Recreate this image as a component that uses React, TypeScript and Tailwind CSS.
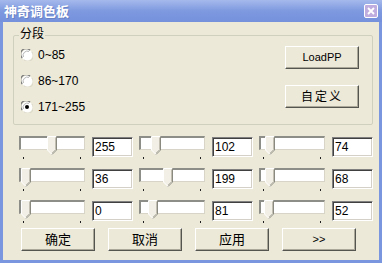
import React from 'react';

const rows = [
  [{ v: 255, t: 28 }, { v: 102, t: 12 }, { v: 74, t: 6 }],
  [{ v: 36, t: 2 }, { v: 199, t: 24 }, { v: 68, t: 6 }],
  [{ v: 0, t: 2 }, { v: 81, t: 9 }, { v: 52, t: 5 }],
];

function Radio({ checked }: { checked?: boolean }) {
  return (
    <svg width="12" height="12" viewBox="0 0 12 12">
      <circle cx="6" cy="6" r="5.5" fill="#ffffff" />
      <path d="M1.2 9 A5.5 5.5 0 0 1 9 1.2" fill="none" stroke="#7c7c7c" strokeWidth="1.3" />
      <path d="M2.4 8 A4.3 4.3 0 0 1 8 2.4" fill="none" stroke="#b4b4b4" strokeWidth="1" />
      <path d="M10.8 3 A5.5 5.5 0 0 1 3 10.8" fill="none" stroke="#d8d5c8" strokeWidth="1" />
      {checked && <circle cx="6" cy="6" r="2" fill="#000000" />}
    </svg>
  );
}

function Thumb() {
  return (
    <svg width="11" height="20" viewBox="0 0 11 20" className="block">
      <polygon points="0.5,0.5 9.5,0.5 9.5,14 5,18.5 0.5,14" fill="#f1efe6" />
      <polyline points="0.5,14 0.5,0.5 9.5,0.5" fill="none" stroke="#ffffff" />
      <polyline points="0.5,14 5,18.5" fill="none" stroke="#ffffff" />
      <polyline points="9.5,0.5 9.5,14 5,18.5" fill="none" stroke="#8a8a80" />
      <polyline points="8.5,1.5 8.5,13.6 5,17" fill="none" stroke="#c2bfb2" />
    </svg>
  );
}

function Track({ t }: { t: number }) {
  return (
    <div className="relative w-[66px] h-[24px]">
      <div className="relative w-[66px] h-[14px] bg-white border-t-2 border-l-2 border-t-[#8e8e88] border-l-[#8e8e88] border-r border-b border-r-[#d8d5c8] border-b-[#d8d5c8]">
        <div className="absolute top-[-2px]" style={{ left: t - 2 }}>
          <Thumb />
        </div>
      </div>
      <div className="flex justify-between px-[4px] mt-[7px]">
        <div className="w-[1px] h-[2px] bg-[#202020]" />
        <div className="w-[1px] h-[2px] bg-[#202020]" />
      </div>
    </div>
  );
}

function Field({ value }: { value: number }) {
  return (
    <div className="w-[41px] h-[20px] bg-white border border-t-[#808080] border-l-[#808080] border-r-[#ffffff] border-b-[#ffffff] shadow-[inset_1px_1px_0_#404040,inset_-1px_-1px_0_#d4d0c8] pl-[2px] text-[12px] leading-[18px] text-black">
      {value}
    </div>
  );
}

function Btn({ children, className = '' }: { children: React.ReactNode; className?: string }) {
  return (
    <div
      className={`w-[74px] h-[23px] flex items-center justify-center bg-[#ece9d8] border border-t-white border-l-white border-r-[#555550] border-b-[#555550] shadow-[inset_-1px_-1px_0_#aca899] text-black ${className}`}
    >
      {children}
    </div>
  );
}

export default function App() {
  return (
    <div
      className="w-[382px] h-[263px] flex flex-col bg-[#7a96df] overflow-hidden select-none"
      style={{ fontFamily: '"Liberation Sans", "Noto Sans CJK SC", sans-serif' }}
    >
      <div className="h-[22px] flex items-center justify-between pl-[4px] pr-[4px] bg-gradient-to-b from-[#a5b9ec] via-[#7e99df] to-[#7591dc]">
        <span className="text-[13px] font-bold text-white leading-none [text-shadow:1px_1px_0_#6a82c4]">神奇调色板</span>
        <div className="w-[14px] h-[14px] rounded-[2px] border border-white bg-[#c0addf] flex items-center justify-center">
          <svg width="8" height="8" viewBox="0 0 8 8">
            <path d="M1 1 L7 7 M7 1 L1 7" stroke="#ffffff" strokeWidth="1.8" />
          </svg>
        </div>
      </div>

      <div className="flex-1 mx-[3px] mb-[3px] bg-[#ece9d8] flex flex-col">
        <div className="relative mt-[13px] ml-[10px] w-[360px] h-[90px] border border-[#d0d0bf] rounded-[2px] flex justify-between">
          <span className="absolute top-[-9px] left-[5px] px-[1px] bg-[#ece9d8] text-[12px] leading-[14px] text-black">分段</span>
          <div className="flex flex-col gap-[14px] pl-[7px] pt-[13px]">
            {['0~85', '86~170', '171~255'].map((label, i) => (
              <div key={label} className="flex items-center gap-[5px] h-[12px]">
                <Radio checked={i === 2} />
                <span className="text-[12px] leading-none text-black">{label}</span>
              </div>
            ))}
          </div>
          <div className="flex flex-col gap-[16px] pt-[10px] pr-[13px]">
            <Btn className="text-[11px]">LoadPP</Btn>
            <Btn className="text-[12px] tracking-[2px]">自定义</Btn>
          </div>
        </div>

        <div className="grid grid-rows-[32px_32px_28px] mt-[11px] ml-[16px]">
          {rows.map((row, r) => (
            <div key={r} className="flex">
              {row.map((c, i) => (
                <div key={i} className="flex items-start w-[120px]">
                  <Track t={c.t} />
                  <div className="ml-[7px] mt-[1px]">
                    <Field value={c.v} />
                  </div>
                </div>
              ))}
            </div>
          ))}
        </div>

        <div className="flex gap-[13px] ml-[18px] text-[13px]">
          <Btn>确定</Btn>
          <Btn>取消</Btn>
          <Btn>应用</Btn>
          <Btn className="text-[11px]">&gt;&gt;</Btn>
        </div>
      </div>
    </div>
  );
}
